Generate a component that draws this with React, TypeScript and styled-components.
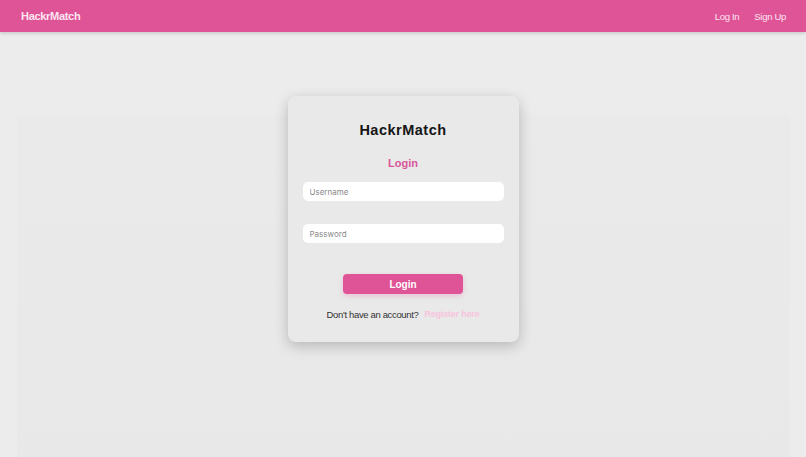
import styled, { createGlobalStyle } from "styled-components";

const GlobalStyle = createGlobalStyle`
  html, body {
    margin: 0;
    padding: 0;
    height: 100%;
  }
  body {
    background: #ececec;
    font-family: "Liberation Sans", Arial, sans-serif;
  }
  #root {
    min-height: 100%;
  }
`;

const Page = styled.div`
  width: 806px;
  height: 457px;
  overflow: hidden;
  display: flex;
  flex-direction: column;
  background: #ececec;
`;

const NavBar = styled.header`
  height: 32px;
  flex-shrink: 0;
  background: #df5397;
  box-shadow: 0 1px 4px rgba(0, 0, 0, 0.18);
  display: flex;
  align-items: center;
  justify-content: space-between;
  padding: 0 20px 0 21px;
  position: relative;
  z-index: 2;
`;

const Brand = styled.div`
  color: #fde6f1;
  font-weight: 700;
  font-size: 11px;
  letter-spacing: -0.3px;
`;

const NavLinks = styled.nav`
  display: flex;
  gap: 15px;
`;

const NavLink = styled.a`
  color: #fde6f1;
  font-size: 9.5px;
  letter-spacing: -0.3px;
  text-decoration: none;
`;

// faint blurred backdrop panel behind the card
const Main = styled.main`
  flex: 1;
  display: flex;
  justify-content: center;
  padding-top: 64px;
  background: linear-gradient(#eaeaea, #e8e8e8) no-repeat 17px 83px / 773px
    100%;
`;

const Card = styled.section`
  width: 231px;
  height: 246px;
  box-sizing: border-box;
  background: #e9e9e9;
  border-radius: 8px;
  box-shadow: 0 4px 14px rgba(0, 0, 0, 0.22);
  display: flex;
  flex-direction: column;
  align-items: center;
  padding: 26px 15px 0;
`;

const Title = styled.h1`
  margin: 0;
  font-size: 14.5px;
  font-weight: 700;
  color: #151515;
  letter-spacing: 0.5px;
`;

const Subtitle = styled.h2`
  margin: 19px 0 0;
  font-size: 11px;
  font-weight: 700;
  color: #d9559a;
`;

const Form = styled.form`
  width: 100%;
  display: flex;
  flex-direction: column;
  align-items: center;
  margin-top: 13px;
`;

const Input = styled.input<{ gap?: number }>`
  width: 100%;
  height: 19px;
  box-sizing: border-box;
  border: none;
  border-radius: 5px;
  background: #fff;
  padding: 0 7px;
  margin-bottom: ${({ gap }) => gap ?? 0}px;
  font-size: 8px;
  font-family: Inter, "Liberation Sans", sans-serif;
  outline: none;
  &::placeholder {
    color: #8a8a8a;
  }
`;

const Button = styled.button`
  width: 120px;
  height: 20px;
  border: none;
  border-radius: 4px;
  background: #df5397;
  color: #fff;
  font-weight: 700;
  font-size: 10px;
  font-family: "Liberation Sans", Arial, sans-serif;
  box-shadow: 0 2px 5px rgba(223, 83, 151, 0.25);
  cursor: pointer;
`;

const Footer = styled.p`
  margin: 15px 0 0;
  font-size: 9.5px;
  line-height: 11px;
  letter-spacing: -0.35px;
  color: #333;
  display: flex;
  gap: 6px;
`;

const RegisterLink = styled.a`
  color: #f8c4dd;
  font-weight: 700;
  font-size: 9px;
  letter-spacing: -0.2px;
  text-decoration: none;
`;

export default function App() {
  return (
    <>
      <GlobalStyle />
      <Page>
        <NavBar>
          <Brand>HackrMatch</Brand>
          <NavLinks>
            <NavLink href="#">Log In</NavLink>
            <NavLink href="#">Sign Up</NavLink>
          </NavLinks>
        </NavBar>
        <Main>
          <Card>
            <Title>HackrMatch</Title>
            <Subtitle>Login</Subtitle>
            <Form onSubmit={(e) => e.preventDefault()}>
              <Input placeholder="Username" gap={23} />
              <Input placeholder="Password" type="password" gap={31} />
              <Button type="submit">Login</Button>
            </Form>
            <Footer>
              Don't have an account?
              <RegisterLink href="#">Register here</RegisterLink>
            </Footer>
          </Card>
        </Main>
      </Page>
    </>
  );
}
